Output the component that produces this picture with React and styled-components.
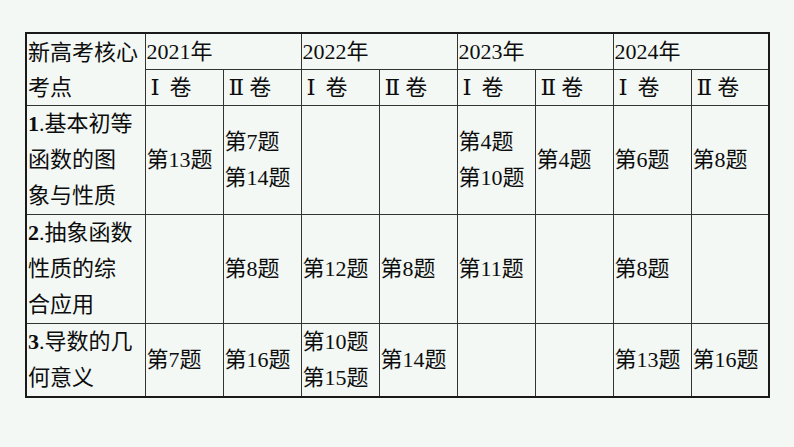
import React from "react";
import styled, { createGlobalStyle } from "styled-components";

const GlobalStyle = createGlobalStyle`
  html, body {
    margin: 0;
    padding: 0;
    background: #f3f8f5;
  }
  body {
    width: 794px;
    height: 447px;
    overflow: hidden;
    font-family: "Liberation Serif", "Noto Sans CJK SC", serif;
  }
`;

const Page = styled.div`
  padding: 32px 0 0 25px;
`;

const Table = styled.table`
  border-collapse: collapse;
  table-layout: fixed;
  border: 2px solid #1a1a1a;
  color: #0d0d0d;
  font-size: 22px;
  line-height: 36px;
`;

const Cell = styled.td`
  border: 1px solid #333;
  padding: 0 0 0 1px;
  vertical-align: middle;
  text-align: left;
  white-space: ${(p) => (p.$wrap ? "normal" : "nowrap")};
  height: ${(p) => p.$h || "auto"};
  line-height: ${(p) => p.$lh || "36px"};
`;

const Roman = styled.span`
  font-family: "DejaVu Serif", "Liberation Serif", serif;
  font-size: 23px;
  margin-left: 4px;
  margin-right: ${(p) => (p.$gap ? "10px" : "5px")};
`;

const Num = styled.b`
  font-weight: 700;
`;

const Line = styled.div``;

const years = ["2021年", "2022年", "2023年", "2024年"];

const rows = [
  {
    label: ["基本初等", "函数的图", "象与性质"],
    n: "1",
    h: "108px",
    cells: [["第13题"], ["第7题", "第14题"], [], [], ["第4题", "第10题"], ["第4题"], ["第6题"], ["第8题"]],
  },
  {
    label: ["抽象函数", "性质的综", "合应用"],
    n: "2",
    h: "108px",
    cells: [[], ["第8题"], ["第12题"], ["第8题"], ["第11题"], [], ["第8题"], []],
  },
  {
    label: ["导数的几", "何意义"],
    n: "3",
    h: "71px",
    cells: [["第7题"], ["第16题"], ["第10题", "第15题"], ["第14题"], [], [], ["第13题"], ["第16题"]],
  },
];

export default function App() {
  return (
    <Page>
      <GlobalStyle />
      <Table>
        <colgroup>
          <col style={{ width: 119 }} />
          {Array.from({ length: 8 }).map((_, i) => (
            <col key={i} style={{ width: 78 }} />
          ))}
        </colgroup>
        <tbody>
          <tr>
            <Cell rowSpan={2} $wrap $lh="35px">
              <Line>新高考核心</Line>
              <Line>考点</Line>
            </Cell>
            {years.map((y) => (
              <Cell key={y} colSpan={2} $h="35px" $lh="34px">
                {y}
              </Cell>
            ))}
          </tr>
          <tr>
            {years.map((y) => (
              <React.Fragment key={y}>
                <Cell $h="34px" $lh="34px">
                  <Roman $gap>Ⅰ</Roman>卷
                </Cell>
                <Cell $h="34px" $lh="34px">
                  <Roman>Ⅱ</Roman>卷
                </Cell>
              </React.Fragment>
            ))}
          </tr>
          {rows.map((r) => (
            <tr key={r.n}>
              <Cell $h={r.h} $wrap>
                {r.label.map((t, i) => (
                  <Line key={i}>
                    {i === 0 && (
                      <>
                        <Num>{r.n}</Num>.
                      </>
                    )}
                    {t}
                  </Line>
                ))}
              </Cell>
              {r.cells.map((c, i) => (
                <Cell key={i}>
                  {c.map((t) => (
                    <Line key={t}>{t}</Line>
                  ))}
                </Cell>
              ))}
            </tr>
          ))}
        </tbody>
      </Table>
    </Page>
  );
}
